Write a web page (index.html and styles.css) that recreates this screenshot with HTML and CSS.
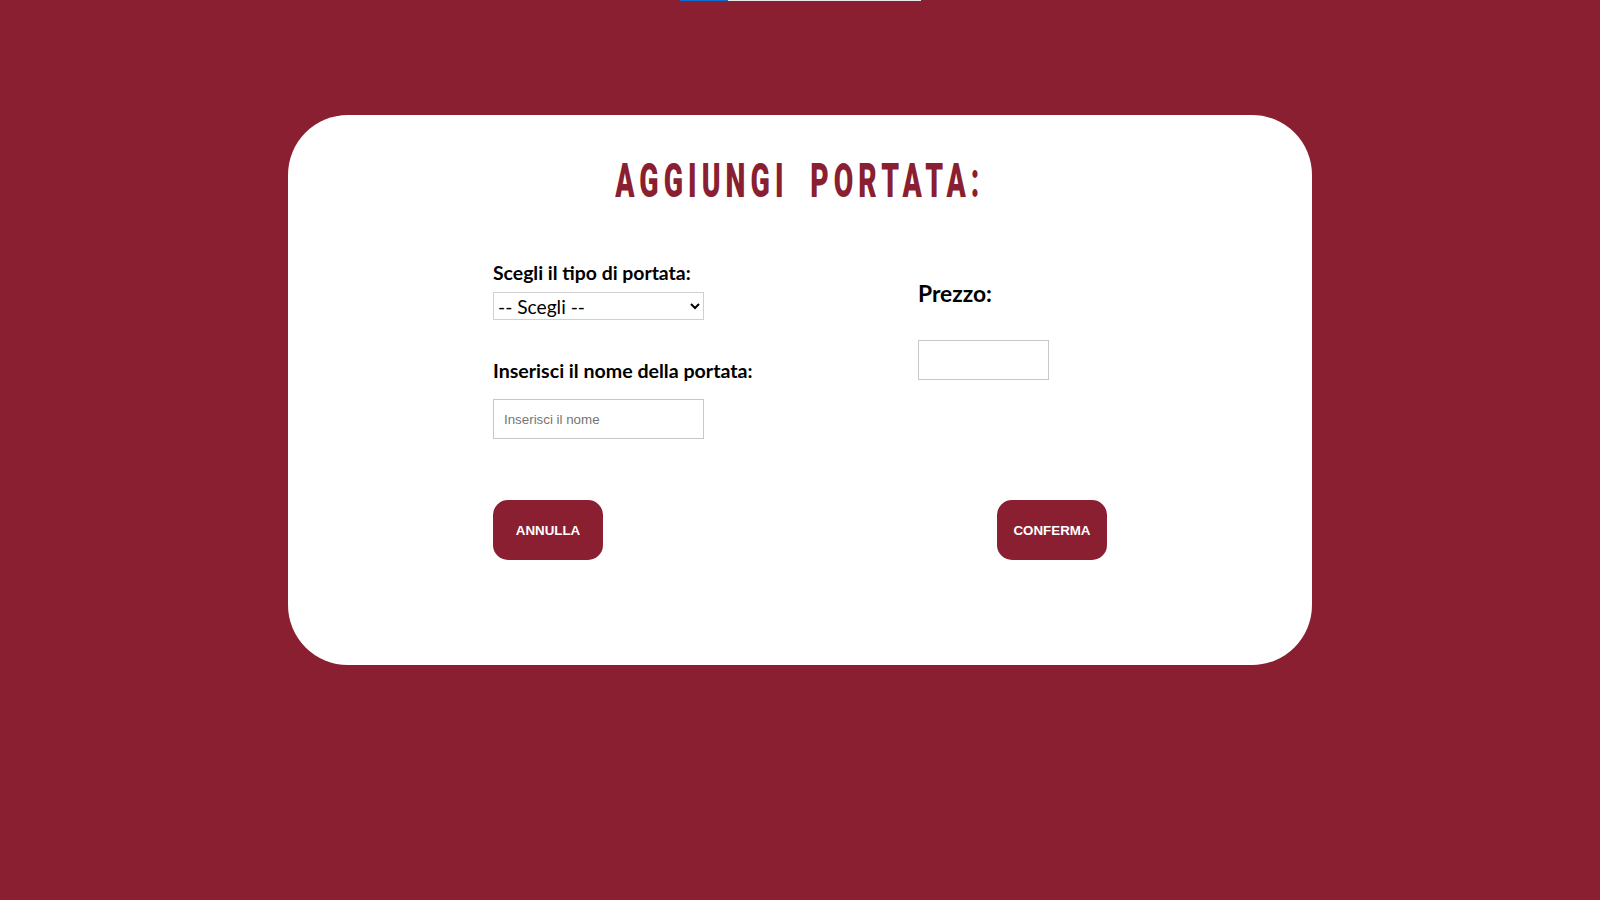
FILE: index.html
```html
<!DOCTYPE html>
<html lang="it">
<head>
<meta charset="utf-8">
<title>Aggiungi portata</title>
<link rel="stylesheet" href="styles.css">
</head>
<body>
  <div class="topbar"><div class="topbar-fill"></div></div>
  <main class="card">
    <h1 class="title"><span class="title-text">AGGIUNGI PORTATA:</span></h1>
    <form class="form">
      <div class="fields">
        <div class="col-left">
          <label class="label" for="tipo">Scegli il tipo di portata:</label>
          <select id="tipo" class="select">
            <option>-- Scegli --</option>
          </select>
          <label class="label label-second" for="nome">Inserisci il nome della portata:</label>
          <input id="nome" class="input input-name" type="text" placeholder="Inserisci il nome">
        </div>
        <div class="col-right">
          <label class="label-price" for="prezzo">Prezzo:</label>
          <input id="prezzo" class="input input-price" type="text">
        </div>
      </div>
      <div class="actions">
        <button type="button" class="btn">ANNULLA</button>
        <button type="button" class="btn">CONFERMA</button>
      </div>
    </form>
  </main>
</body>
</html>
```
FILE: styles.css
```css
* { box-sizing: border-box; }

body {
  margin: 0;
  background: #8a1f31;
  font-family: "Lato", "Liberation Sans", sans-serif;
  min-height: 900px;
}

.topbar {
  width: 241px;
  height: 1px;
  margin: 0 auto;
  background: #e9e9e9;
  display: flex;
}

.topbar-fill {
  width: 48px;
  background: #0f6cd0;
}

.card {
  width: 1024px;
  height: 550px;
  margin: 114px auto 0;
  background: #ffffff;
  border-radius: 60px;
  padding-top: 42px;
}

.title {
  margin: 0;
  text-align: center;
  line-height: 48px;
  font-size: 48px;
  color: #8a1f31;
  font-family: "Roboto", "Liberation Sans", sans-serif;
  font-weight: 900;
}

.title-text {
  display: inline-block;
  letter-spacing: 8.6px;
  word-spacing: 16px;
  transform: scaleX(0.59);
}

.form {
  width: 614px;
  margin: 56px auto 0;
}

.fields {
  display: grid;
  grid-template-columns: 425px 1fr;
}

.col-left, .col-right {
  display: flex;
  flex-direction: column;
  align-items: flex-start;
}

.col-right { padding-top: 18px; }

.label {
  font-family: "Lato", sans-serif;
  font-weight: 700;
  font-size: 19.4px;
  line-height: 24px;
  color: #000;
}

.label-second { margin-top: 39px; font-size: 19.6px; }

.label-price {
  font-family: "Lato", sans-serif;
  font-weight: 700;
  font-size: 22.8px;
  line-height: 28px;
  color: #000;
}

.select {
  margin-top: 7px;
  width: 211px;
  height: 28px;
  border: 1px solid #d0d0d0;
  border-radius: 0;
  background: #fff;
  font-family: "Lato", sans-serif;
  font-size: 19.2px;
  color: #000;
  padding: 0;
}

.input {
  height: 40px;
  border: 1px solid #c8c8c8;
  border-radius: 0;
  padding: 0 10px;
  font-family: "Liberation Sans", Arial, sans-serif;
  font-size: 13.33px;
  color: #000;
  background: #fff;
}

.input::placeholder { color: #757575; }

.input-name { margin-top: 16px; width: 211px; }

.input-price { margin-top: 33px; width: 131px; }

.actions {
  margin-top: 61px;
  display: flex;
  justify-content: space-between;
}

.btn {
  width: 110px;
  height: 60px;
  border: none;
  border-radius: 15px;
  background: #8a1f31;
  color: #fff;
  font-family: "Liberation Sans", Arial, sans-serif;
  font-weight: 700;
  font-size: 13.33px;
  cursor: pointer;
}
```
